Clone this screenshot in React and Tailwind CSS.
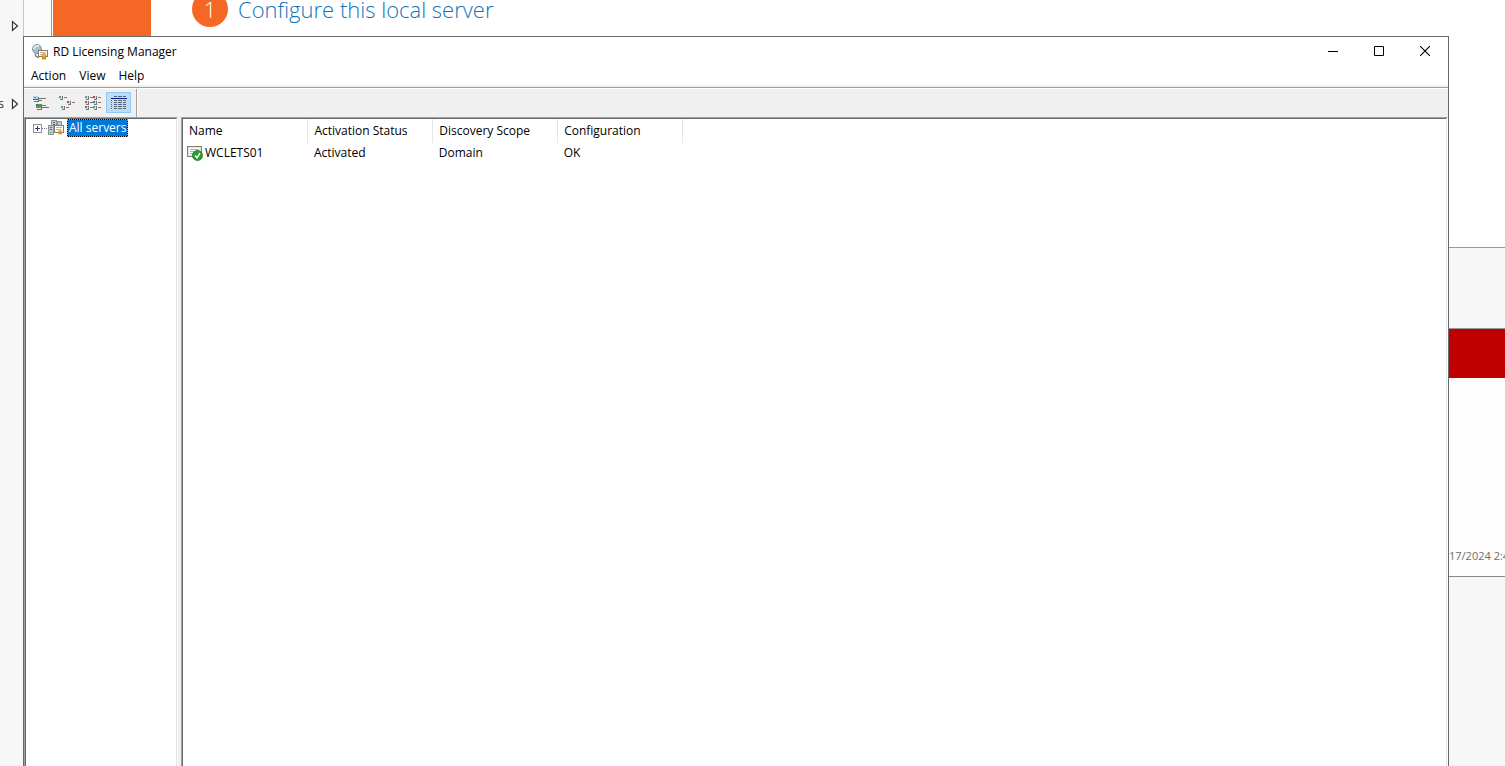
import React from "react";

const uiFont = "font-['Open_Sans','Noto_Sans',sans-serif]";

function LicenseIcon() {
  return (
    <svg width="16" height="16" viewBox="0 0 16 16" aria-hidden="true">
      <circle cx="5" cy="5" r="4.5" fill="#a9bfca" stroke="#7f98a6" />
      <path d="M2 5a3.500 3.500 0 0 1 5-3" fill="none" stroke="#e9f4f9" strokeWidth="1.500" />
      <path d="M3 9.500l1 3 3 1" fill="none" stroke="#7d8b93" strokeWidth="1.500" />
      <rect x="6.500" y="6.500" width="9" height="6" fill="#fffdf6" stroke="#8d7662" />
      <path d="M8 8.500h6M8 10.500h2" stroke="#b8b8c4" />
      <path d="M10 12h4v4l-2-1-2 1z" fill="#d58a12" />
      <circle cx="12" cy="11.500" r="2" fill="#f1b52e" stroke="#c47e0c" strokeWidth=".6" />
    </svg>
  );
}

function ServersIcon() {
  return (
    <svg width="16" height="16" viewBox="0 0 16 16" aria-hidden="true">
      <rect x="3.500" y=".5" width="5" height="8" fill="#c3cace" stroke="#8a949b" />
      <path d="M5 2.500h2M5 4.500h2" stroke="#5d6a73" />
      <rect x=".5" y="5.500" width="5" height="9" fill="#c3cace" stroke="#8a949b" />
      <path d="M2 7.500h2M2 9.500h2" stroke="#5d6a73" />
      <path d="M2 12.500h1" stroke="#38a048" />
      <rect x="9.500" y="1.500" width="4" height="4" fill="#c3cace" stroke="#8a949b" />
      <rect x="6.500" y="5.500" width="9" height="7" fill="#fff" stroke="#86776c" />
      <path d="M8 7.500h6M8 9.500h2" stroke="#aab4d0" />
      <path d="M10.500 11h3v4l-1.500-1-1.500 1z" fill="#d58a12" />
      <circle cx="12" cy="10.500" r="1.800" fill="#f1b52e" />
    </svg>
  );
}

function ActivatedIcon() {
  return (
    <svg width="16" height="16" viewBox="0 0 16 16" aria-hidden="true">
      <rect x=".5" y="1.500" width="14" height="10" fill="#fff" stroke="#8c7d73" />
      <rect x="1.500" y="2.500" width="12" height="8" fill="none" stroke="#e4ded8" />
      <path d="M3 4.500h9M3 6.500h4M3 8.500h3" stroke="#a9adc9" />
      <circle cx="10.500" cy="10.500" r="5" fill="#23a02b" stroke="#15791c" strokeWidth=".8" />
      <path d="M8 10.500l2 2.500 3-5" fill="none" stroke="#fff" strokeWidth="1.500" />
    </svg>
  );
}

function LargeIconsGlyph() {
  return (
    <svg width="16" height="16" viewBox="0 0 16 16" shapeRendering="crispEdges" aria-hidden="true">
      <path d="M0 1h5v4h-5z" fill="#a8d4ee" />
      <path d="M1 2h2v1h-2z" fill="#3d9be0" />
      <path d="M0 4h5v1h-5z" fill="#1c7f6b" />
      <path d="M5 2h1v5h-1zM6 3h7v1h-7zM6 5h3v1h-3zM1 6h5v1h-5z" fill="#707070" />
      <path d="M3 9h5v4h-5z" fill="#3baa4e" />
      <path d="M3 9h2v2h-2z" fill="#3868d0" />
      <path d="M5 10h2v2h-2z" fill="#e0502d" />
      <path d="M8 9h1v6h-1zM9 10h4v1h-4zM9 12h7v1h-7zM4 14h5v1h-5z" fill="#707070" />
    </svg>
  );
}

function SmallItem({ x, y, color }) {
  return (
    <g>
      <rect x={x} y={y} width="3" height="3" fill="#dcdcdc" />
      <path d={`M${x + 3} ${y}h1v4h-1zM${x + 1} ${y + 3}h3v1h-3zM${x + 5} ${y + 1}h3v1h-3z`} fill="#77797b" />
      <rect x={x} y={y} width="2" height="2" fill={color} />
    </g>
  );
}

function SmallIconsGlyph() {
  return (
    <svg width="16" height="16" viewBox="0 0 16 16" shapeRendering="crispEdges" aria-hidden="true">
      <SmallItem x={0} y={1} color="#46a9a0" />
      <SmallItem x={8} y={6} color="#d44b2a" />
      <SmallItem x={2} y={11} color="#5aa94b" />
    </svg>
  );
}

function ListGlyph() {
  return (
    <svg width="16" height="16" viewBox="0 0 16 16" shapeRendering="crispEdges" aria-hidden="true">
      <SmallItem x={0} y={1} color="#46a9a0" />
      <SmallItem x={8} y={1} color="#d44b2a" />
      <SmallItem x={0} y={6} color="#d44b2a" />
      <SmallItem x={8} y={6} color="#4779c7" />
      <SmallItem x={0} y={11} color="#4779c7" />
      <SmallItem x={8} y={11} color="#5aa94b" />
    </svg>
  );
}

function DetailsGlyph() {
  return (
    <svg width="16" height="16" viewBox="0 0 16 16" shapeRendering="crispEdges" aria-hidden="true">
      <path d="M3 1h3v1h-3zM7 1h4v1h-4zM12 1h3v1h-3z" fill="#52657a" />
      <path d="M0 3h16v1h-16z" fill="#061d80" />
      <path
        d="M3 5h3v1h-3zM7 5h4v1h-4zM12 5h3v1h-3zM3 7h3v1h-3zM7 7h4v1h-4zM12 7h3v1h-3zM3 9h3v1h-3zM7 9h4v1h-4zM12 9h3v1h-3zM3 11h3v1h-3zM7 11h4v1h-4zM12 11h3v1h-3zM3 13h3v1h-3zM7 13h4v1h-4zM12 13h3v1h-3z"
        fill="#5b6a78"
      />
      <path d="M0 5h1v1h-1zM0 9h1v1h-1z" fill="#2d7f86" />
      <path d="M0 7h1v1h-1zM0 13h1v1h-1z" fill="#c43b3b" />
      <path d="M0 11h1v1h-1z" fill="#3767c0" />
    </svg>
  );
}

function Arrow() {
  return (
    <svg width="8" height="12" viewBox="0 0 8 12" aria-hidden="true">
      <path d="M1.500 1.500v9l5-4.500z" fill="#fff" stroke="#333" strokeWidth="1.200" />
    </svg>
  );
}

const tools = [
  { label: "Large icons", Glyph: LargeIconsGlyph },
  { label: "Small icons", Glyph: SmallIconsGlyph },
  { label: "List", Glyph: ListGlyph },
  { label: "Details", Glyph: DetailsGlyph, active: true },
];

const columns = ["Name", "Activation Status", "Discovery Scope", "Configuration"];

function ServerManager() {
  return (
    <div className="flex min-h-screen bg-white">
      <nav className="flex w-6 shrink-0 flex-col items-end border-r border-[#c8c8c8] bg-[#f7f7f7] pt-5 pr-1">
        <button aria-label="Expand services"><Arrow /></button>
        <button className="mt-16 flex items-center gap-[7px] text-xs text-[#333]">
          s<Arrow />
        </button>
      </nav>
      <div className="w-7 shrink-0 border-r border-[#999] bg-[#fafafa]" />
      <main className="flex grow items-start gap-[41px] pl-px">
        <div className="h-20 w-[98px] bg-[#f56725]" />
        <div className="-mt-[9px] flex items-center gap-2.5">
          <span className="flex size-9 items-center justify-center rounded-full bg-[#f56725] text-[22px] font-light text-white">1</span>
          <a href="#configure" className="text-[22px] font-light text-[#1275bb]">Configure this local server</a>
        </div>
      </main>
      <aside className="flex w-[57px] shrink-0 flex-col overflow-hidden">
        <div className="h-[247px]" />
        <div className="h-[82px] border-y border-[#999] bg-[#f7f7f7]" />
        <div className="h-[49px] bg-[#c00000]" />
        <div className="flex h-[199px] items-end border-b border-[#8a8a8a] bg-[#fdfdfd] pb-3 pl-px">
          <span className="text-[11px] leading-4 whitespace-nowrap text-[#6d6d6d]">17/2024 2:4</span>
        </div>
        <div className="grow bg-[#f7f7f7]" />
      </aside>
    </div>
  );
}

function LicensingWindow() {
  return (
    <section className="absolute top-9 right-14 bottom-0 left-[23px] flex flex-col border border-b-0 border-[#696969] bg-white text-xs text-black">
      <header className="flex h-[30px] items-start pl-2">
        <div className="flex h-[30px] grow items-center gap-[5px]">
          <LicenseIcon />
          <h1>RD Licensing Manager</h1>
        </div>
        <div className="flex">
          <button aria-label="Minimize" className="flex h-7 w-[46px] items-center justify-center">
            <svg width="10" height="10" viewBox="0 0 10 10"><path d="M0 5.500h10" stroke="#000" /></svg>
          </button>
          <button aria-label="Maximize" className="flex h-7 w-[46px] items-center justify-center">
            <svg width="10" height="10" viewBox="0 0 10 10"><path d="M.5.5h9v9h-9z" fill="none" stroke="#000" /></svg>
          </button>
          <button aria-label="Close" className="flex h-7 w-[46px] items-center justify-center">
            <svg width="10" height="10" viewBox="0 0 10 10"><path d="M0 0l10 10M10 0L0 10" stroke="#000" strokeWidth="1.100" /></svg>
          </button>
        </div>
      </header>
      <nav className="flex h-[18px] items-center gap-[13px] pl-[7px]">
        <button>Action</button>
        <button>View</button>
        <button>Help</button>
      </nav>
      <div className="h-[3px] border-b border-[#a0a0a0] bg-[#f0f0f0]" />
      <div className="flex h-[29px] items-start border-t border-white bg-[#f0f0f0] pl-1" role="toolbar">
        <div className="flex gap-px pt-[3px]">
          {tools.map(({ label, Glyph, active }) => (
            <button
              key={label}
              aria-label={label}
              className={active ? "flex h-[21px] w-[25px] items-center justify-center border border-[#90c8f6] bg-[#c0dcf3]" : "flex h-[21px] w-[25px] items-center justify-center"}
            >
              <Glyph />
            </button>
          ))}
        </div>
        <div className="ml-[5px] h-full border-r border-l border-r-white border-l-[#a0a0a0]" />
      </div>
      <div className="flex grow gap-[3px] bg-[#f0f0f0]">
        <div className="flex w-[154px] shrink-0 border-t border-r border-l border-t-[#a0a0a0] border-r-white border-l-[#a0a0a0]">
          <div className="grow border-t border-r border-l border-t-[#696969] border-r-[#e3e3e3] border-l-[#696969] bg-white">
            <div className="flex h-[18px] items-center pl-[7px]">
              <button aria-label="Expand All servers">
                <svg width="9" height="9" viewBox="0 0 9 9" shapeRendering="crispEdges">
                  <path d="M.5.5h8v8h-8z" fill="#fff" stroke="#919191" />
                  <path d="M2 4h5v1h-5zM4 2h1v5h-1z" fill="#263f87" />
                </svg>
              </button>
              <span className="mr-px w-[5px] border-t border-dotted border-[#808080]" />
              <ServersIcon />
              <button className="ml-[3px] border border-dotted border-[#ff8728] bg-black">
                <span className="block bg-[#0078d7] px-px leading-4 text-white">All servers</span>
              </button>
            </div>
          </div>
        </div>
        <div className="flex grow border-t border-r border-l border-t-[#a0a0a0] border-r-white border-l-[#a0a0a0]">
          <div className="grow border-t border-r border-l border-t-[#696969] border-r-[#e3e3e3] border-l-[#696969] bg-white">
            <table className="w-[500px] table-fixed border-collapse text-left">
              <thead>
                <tr className="h-6">
                  {columns.map((name) => (
                    <th key={name} scope="col" className="border-r border-[#e5e5e5] p-0 pl-1.5 font-normal">{name}</th>
                  ))}
                </tr>
              </thead>
              <tbody>
                <tr className="h-5">
                  <td className="p-0 pl-1">
                    <span className="flex items-center gap-0.5"><ActivatedIcon />WCLETS01</span>
                  </td>
                  <td className="p-0 pl-1.5">Activated</td>
                  <td className="p-0 pl-1.5">Domain</td>
                  <td className="p-0 pl-1.5">OK</td>
                </tr>
              </tbody>
            </table>
          </div>
        </div>
      </div>
    </section>
  );
}

export default function App() {
  return (
    <div className={`relative min-h-screen overflow-hidden ${uiFont}`}>
      <ServerManager />
      <LicensingWindow />
    </div>
  );
}
